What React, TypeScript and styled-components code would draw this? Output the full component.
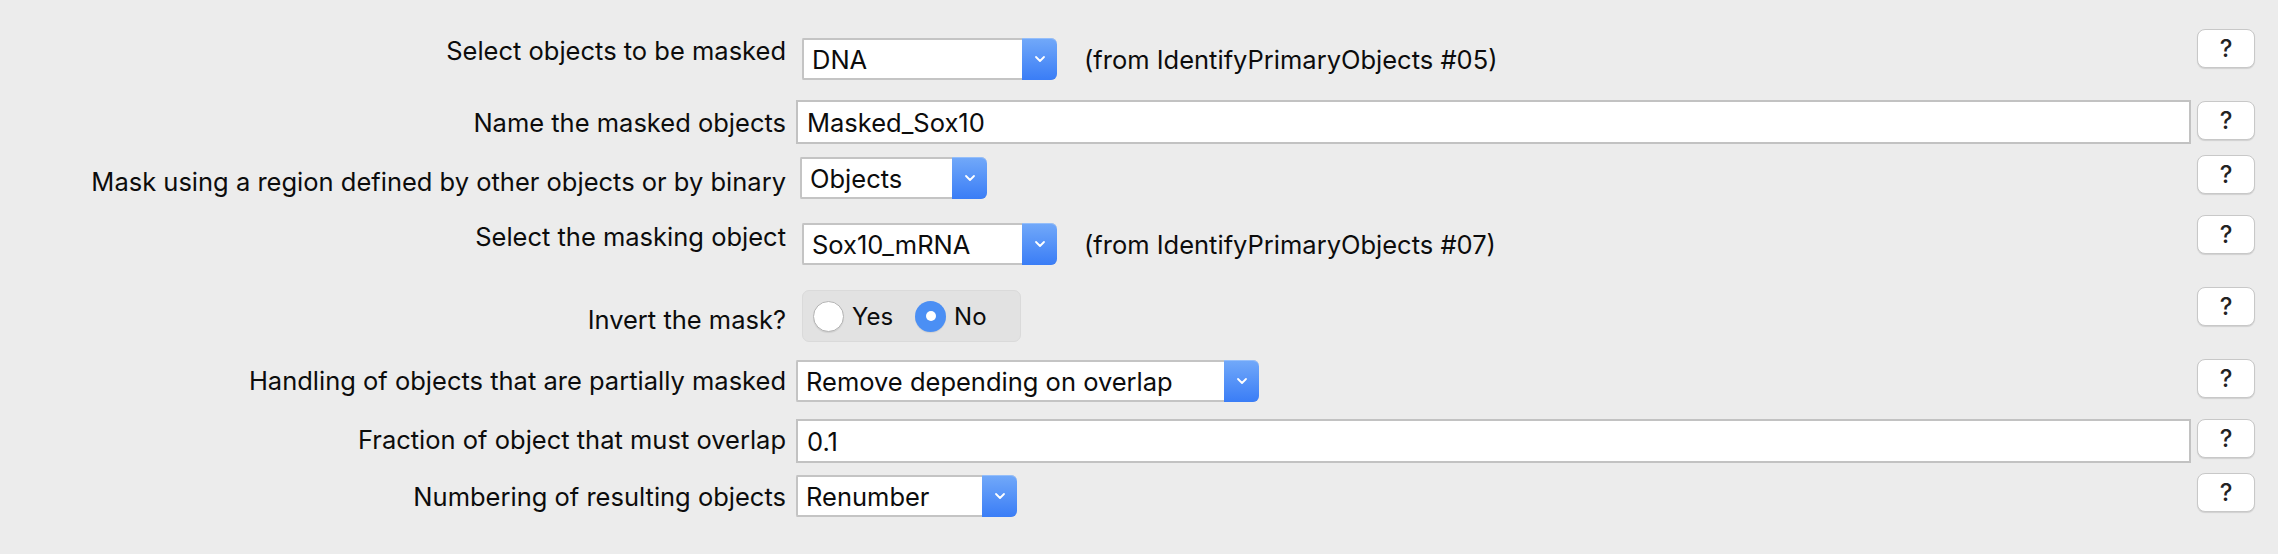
import React from 'react';
import styled, { createGlobalStyle } from 'styled-components';

// -------------
// Global styles
// -------------

const GlobalStyle = createGlobalStyle`
  html, body {
    margin: 0;
    padding: 0;
    background: #ececec;
  }
  body {
    font-family: Inter, "Liberation Sans", sans-serif;
    color: #0c0c0c;
  }
`;

// -------------------
// Internal Components
// -------------------

const Panel = styled.div`
  width: 2278px;
  height: 554px;
  box-sizing: border-box;
  padding: 29px 23px 0 0;
  background: #ececec;
  overflow: hidden;
`;

const Row = styled.div<{ $height: number }>`
  display: grid;
  grid-template-columns: 786px 1fr 58px;
  align-items: start;
  height: ${p => p.$height}px;
`;

const Label = styled.div<{ $top: number }>`
  margin-top: ${p => p.$top}px;
  text-align: right;
  font-size: 25.5px;
  line-height: 40px;
  white-space: nowrap;
`;

const Cell = styled.div<{ $top: number; $indent: number }>`
  display: flex;
  align-items: center;
  min-width: 0;
  margin-top: ${p => p.$top}px;
  padding-left: ${p => p.$indent}px;
  padding-right: 6px;
`;

const Select = styled.div<{ $width: number }>`
  display: flex;
  width: ${p => p.$width}px;
  height: 42px;
  box-sizing: border-box;
  background: #fff;
  border: 2px solid #c4c4c4;
  border-right: none;
  border-radius: 2px 6px 6px 2px;
`;

const SelectValue = styled.div`
  flex: 1;
  padding-left: 8px;
  font-size: 25.5px;
  line-height: 39px;
  white-space: nowrap;
  overflow: hidden;
`;

const SelectArrow = styled.div`
  display: flex;
  align-items: center;
  justify-content: center;
  width: 35px;
  margin: -2px 0;
  border-radius: 0 6px 6px 0;
  background: linear-gradient(#72a9f9, #3a7df6);
  box-shadow: inset 0 1px 0 rgba(255, 255, 255, 0.25);
`;

const Note = styled.span`
  margin-left: 27px;
  font-size: 25.5px;
  white-space: nowrap;
`;

const TextField = styled.input`
  flex: 1;
  min-width: 0;
  height: 44px;
  box-sizing: border-box;
  margin: 0;
  padding: 0 9px;
  border: 2px solid #c2c2c2;
  border-radius: 0;
  background: #fff;
  font-family: Inter, "Liberation Sans", sans-serif;
  font-size: 25.5px;
  color: #0c0c0c;
  outline: none;
`;

const RadioGroup = styled.div`
  display: flex;
  align-items: center;
  width: 219px;
  height: 52px;
  box-sizing: border-box;
  padding-left: 10px;
  border-radius: 7px;
  background: #e2e2e2;
  border: 1px solid #dadada;
`;

const RadioOption = styled.label`
  display: flex;
  align-items: center;
  gap: 8px;
  margin-right: 22px;
  font-size: 24px;
`;

const RadioDot = styled.span<{ $checked: boolean }>`
  display: flex;
  align-items: center;
  justify-content: center;
  width: 31px;
  height: 31px;
  box-sizing: border-box;
  border-radius: 50%;
  background: ${p => (p.$checked ? '#4b8ff4' : '#fff')};
  border: ${p => (p.$checked ? 'none' : '1.5px solid #b4b4b4')};
  box-shadow: 0 1px 1px rgba(0, 0, 0, 0.08);

  &::after {
    content: '';
    display: ${p => (p.$checked ? 'block' : 'none')};
    width: 10px;
    height: 10px;
    border-radius: 50%;
    background: #fff;
  }
`;

const HelpButton = styled.div<{ $top?: number }>`
  display: flex;
  align-items: center;
  justify-content: center;
  height: 39px;
  box-sizing: border-box;
  margin-top: ${p => p.$top ?? 0}px;
  border: 1px solid #c8c8c8;
  border-radius: 8px;
  background: #fff;
  box-shadow: 0 1px 1px rgba(0, 0, 0, 0.12);
  font-size: 24px;
  font-weight: 500;
  color: #222;
`;

// ------------
// Small pieces
// ------------

function Chevron() {
  return (
    <svg width="12" height="8" viewBox="0 0 12 8">
      <path d="M2 2 L6 6 L10 2" fill="none" stroke="#fff" strokeWidth="1.8" strokeLinecap="round" strokeLinejoin="round" />
    </svg>
  );
}

function Choice({ value, width }: { value: string; width: number }) {
  return (
    <Select $width={width}>
      <SelectValue>{value}</SelectValue>
      <SelectArrow>
        <Chevron />
      </SelectArrow>
    </Select>
  );
}

function Radio({ text, checked }: { text: string; checked: boolean }) {
  return (
    <RadioOption>
      <RadioDot $checked={checked} />
      {text}
    </RadioOption>
  );
}

// -------------------
// Exported Components
// -------------------

export default function App() {
  return (
    <Panel>
      <GlobalStyle />
      <Row $height={71}>
        <Label $top={2}>Select objects to be masked</Label>
        <Cell $top={9} $indent={16}>
          <Choice value="DNA" width={255} />
          <Note>(from IdentifyPrimaryObjects #05)</Note>
        </Cell>
        <HelpButton>?</HelpButton>
      </Row>
      <Row $height={55}>
        <Label $top={3}>Name the masked objects</Label>
        <Cell $top={0} $indent={10}>
          <TextField readOnly value="Masked_Sox10" />
        </Cell>
        <HelpButton $top={1}>?</HelpButton>
      </Row>
      <Row $height={60}>
        <Label $top={7}>Mask using a region defined by other objects or by binary</Label>
        <Cell $top={2} $indent={14}>
          <Choice value="Objects" width={187} />
        </Cell>
        <HelpButton>?</HelpButton>
      </Row>
      <Row $height={72}>
        <Label $top={2}>Select the masking object</Label>
        <Cell $top={8} $indent={16}>
          <Choice value="Sox10_mRNA" width={255} />
          <Note>(from IdentifyPrimaryObjects #07)</Note>
        </Cell>
        <HelpButton>?</HelpButton>
      </Row>
      <Row $height={72}>
        <Label $top={13}>Invert the mask?</Label>
        <Cell $top={3} $indent={16}>
          <RadioGroup>
            <Radio text="Yes" checked={false} />
            <Radio text="No" checked />
          </RadioGroup>
        </Cell>
        <HelpButton>?</HelpButton>
      </Row>
      <Row $height={60}>
        <Label $top={2}>Handling of objects that are partially masked</Label>
        <Cell $top={1} $indent={10}>
          <Choice value="Remove depending on overlap" width={463} />
        </Cell>
        <HelpButton>?</HelpButton>
      </Row>
      <Row $height={54}>
        <Label $top={1}>Fraction of object that must overlap</Label>
        <Cell $top={0} $indent={10}>
          <TextField readOnly value="0.1" />
        </Cell>
        <HelpButton>?</HelpButton>
      </Row>
      <Row $height={81}>
        <Label $top={4}>Numbering of resulting objects</Label>
        <Cell $top={2} $indent={10}>
          <Choice value="Renumber" width={221} />
        </Cell>
        <HelpButton>?</HelpButton>
      </Row>
    </Panel>
  );
}
